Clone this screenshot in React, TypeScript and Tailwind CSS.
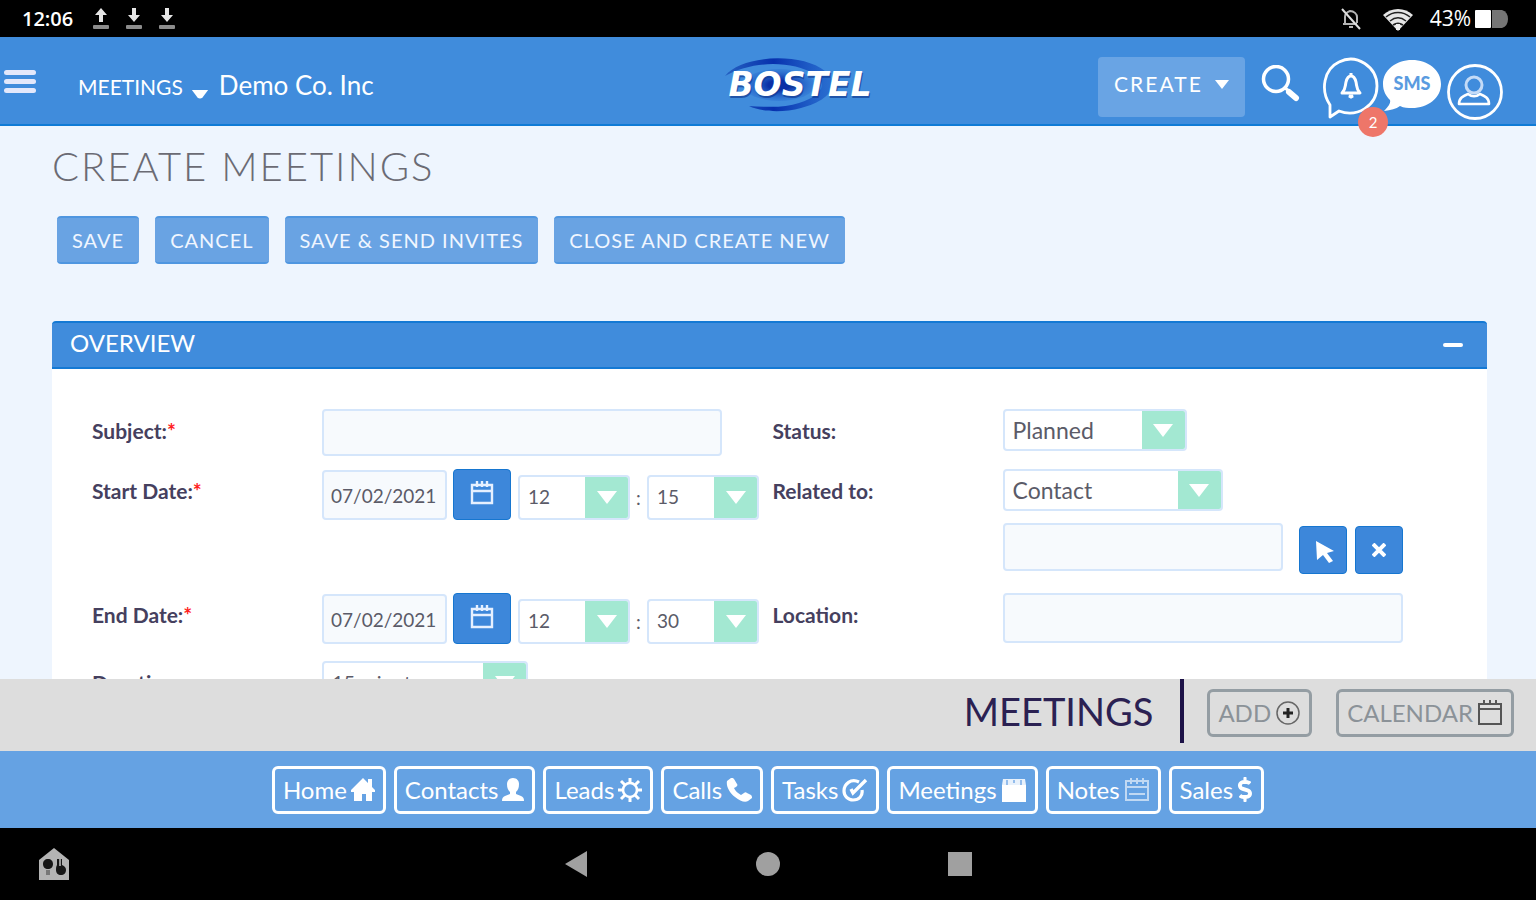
import React from "react";
import { FaDollarSign } from "react-icons/fa";

type IconProps = { className?: string };

function TransferIcon({ up = false }: { up?: boolean }) {
  return (
    <svg viewBox="0 0 18 22" className="h-[22px] w-[18px]" fill="#e6e6e6" aria-hidden="true">
      <path d={up ? "M9 0l6 7h-4v7H7V7H3z" : "M7 0h4v7h4l-6 7-6-7h4z"} />
      <rect x="1" y="17" width="16" height="4" rx="1" fill="#8c8c8c" />
    </svg>
  );
}

function StatusBar() {
  return (
    <div className="flex h-[37px] shrink-0 items-center justify-between bg-black pr-[27px] pl-[22px] text-white">
      <div className="flex items-center gap-[15px]">
        <span className="mr-1 font-['Open_Sans'] text-[20px] font-semibold">12:06</span>
        <TransferIcon up />
        <TransferIcon />
        <TransferIcon />
      </div>
      <div className="flex items-center">
        <svg viewBox="0 0 22 22" className="mr-5 h-[22px] w-[22px]" fill="none" stroke="#b5b5b5" strokeWidth="2" aria-hidden="true">
          <path d="M5 15V9c0-3 2-5 5-6 4 0 7 3 7 6v6M3 16h14M9 19h4" />
          <path d="M2 1l18 20" stroke="#dedede" />
        </svg>
        <svg viewBox="0 0 32 24" className="mr-4 h-6 w-8" aria-hidden="true">
          <path d="M1 8C9 0 23 0 31 8L16 24z" fill="#e6e6e6" />
          <path d="M4 10c7-6 17-6 24 0M8 14c5-4 11-4 16 0M11 18c3-2 7-2 10 0" fill="none" stroke="#222" strokeWidth="1.6" />
          <path d="M14 17h4v6h-4z" fill="#eee" />
        </svg>
        <span className="mr-1 font-['Open_Sans'] text-[21px]">43%</span>
        <svg viewBox="0 0 34 18" className="h-[18px] w-[34px]" aria-hidden="true">
          <path d="M17 0h10q6 2 6 9t-6 9H17z" fill="#757575" />
          <rect width="16" height="18" rx="1" fill="#fff" />
        </svg>
      </div>
    </div>
  );
}

function Logo() {
  return (
    <svg viewBox="0 0 176 60" className="h-[60px] w-[176px]" role="img" aria-label="Bostel">
      <defs>
        <linearGradient id="ring" x1="0" x2="1">
          <stop offset="0" stopColor="#0a35a8" stopOpacity="0.5" />
          <stop offset="0.45" stopColor="#0731ae" />
          <stop offset="1" stopColor="#1b5cc8" stopOpacity="0.6" />
        </linearGradient>
        <radialGradient id="core">
          <stop offset="0.3" stopColor="#0b2fa6" />
          <stop offset="1" stopColor="#2467cf" stopOpacity="0.3" />
        </radialGradient>
      </defs>
      <ellipse cx="66" cy="30" rx="36" ry="16" fill="url(#core)" />
      <path d="M12 21C28 0 88 -3 112 16c18 14 2 31-24 37-18 5-40 4-52-2 18 1 36 2 50-3 22-7 30-19 15-29C80 6 40 5 12 21z" fill="url(#ring)" />
      <text x="88" y="43" textAnchor="middle" fontFamily="DejaVu Sans" fontWeight="700" fontStyle="italic" fontSize="33" fill="#10378f" opacity="0.65">BOSTEL</text>
      <text x="87" y="41" textAnchor="middle" fontFamily="DejaVu Sans" fontWeight="700" fontStyle="italic" fontSize="33" fill="#fff" aria-hidden="true">BOSTEL</text>
    </svg>
  );
}

function Header() {
  return (
    <header className="flex h-[89px] shrink-0 items-start border-b-2 border-[#0f7bd6] bg-[#408cdc] pr-8 pl-1 text-white">
      <div className="flex w-[709px] shrink items-center pt-[30px]">
        <button type="button" aria-label="Menu" className="mb-2 flex w-8 flex-col gap-1">
          <span className="h-[5px] rounded-sm bg-[#e3e8fb]" />
          <span className="h-[5px] rounded-sm bg-[#e3e8fb]" />
          <span className="h-[5px] rounded-sm bg-[#e3e8fb]" />
        </button>
        <button type="button" className="ml-[42px] flex items-end gap-2 pt-1 text-[21px] leading-8">
          MEETINGS
          <svg viewBox="0 0 18 10" className="mb-1 h-[9px] w-[18px]" fill="#fff" aria-hidden="true">
            <path d="M0 0h18l-6 8q-3 3-6 0z" />
          </svg>
        </button>
        <a href="#company" className="ml-[10px] text-[26px] leading-8">Demo Co. Inc</a>
      </div>
      <a href="#home" className="pt-[18px]"><Logo /></a>
      <div className="ml-auto flex items-start pt-5">
        <button type="button" className="flex h-[60px] w-[147px] items-center justify-center gap-3 rounded-sm bg-[#69a4e4] pb-1.5 text-[21px] tracking-widest">
          CREATE
          <svg viewBox="0 0 14 9" className="h-[9px] w-[14px]" fill="#fff" aria-hidden="true"><path d="M0 0h14L7 9z" /></svg>
        </button>
        <button type="button" aria-label="Search" className="mt-2 ml-4">
          <svg viewBox="0 0 40 38" className="h-[38px] w-10" fill="none" stroke="#fff" aria-hidden="true">
            <circle cx="15" cy="14" r="12.5" strokeWidth="3.5" />
            <path d="M24 23l4 3" strokeWidth="3" />
            <path d="M28 27l7 6" strokeWidth="6" strokeLinecap="round" />
          </svg>
        </button>
        <button type="button" aria-label="Notifications" className="relative ml-[21px]">
          <svg viewBox="0 0 58 64" className="h-16 w-[58px]" fill="none" stroke="#fff" aria-hidden="true">
            <path d="M8 48C-2 33 2 12 17 5c18-9 38 5 38 24 0 20-20 32-38 25L8 60z" strokeWidth="2.8" strokeLinejoin="round" />
            <path d="M20 36c4-4 3-7 4-11 1-4 2-6 5-6s4 2 5 6c1 4 0 7 4 11z" strokeWidth="3" strokeLinejoin="round" />
            <path d="M29 16v3M27 39h4l-2 1z" strokeWidth="3" />
          </svg>
          <span className="absolute top-[50px] left-9 flex h-[30px] w-[30px] items-center justify-center rounded-full bg-[#ee7669] text-[15px] text-white">2</span>
        </button>
        <button type="button" aria-label="SMS messages" className="mt-[2px] ml-[2px]">
          <svg viewBox="0 0 60 54" className="h-[54px] w-[60px]" aria-hidden="true">
            <path d="M30 1C14 1 1 11 1 25c0 7 3 12 7 16 1 3-2 7-6 11 7-1 12-2 16-5 4 2 8 2 12 2 16 0 29-10 29-24S46 1 30 1z" fill="#fff" />
            <text x="30" y="31" textAnchor="middle" fontFamily="Lato" fontWeight="900" fontSize="18" fill="#5a9be0">SMS</text>
          </svg>
        </button>
        <button type="button" aria-label="Account" className="mt-[6px] ml-1">
          <svg viewBox="0 0 58 58" className="h-[58px] w-[58px]" fill="none" stroke="#fff" aria-hidden="true">
            <circle cx="29" cy="29" r="26.5" strokeWidth="2.8" />
            <circle cx="28" cy="22" r="8" strokeWidth="3" stroke="#c4dbf7" />
            <path d="M13 41c0-6 4-8 9-10 4 3 8 3 12 0 5 2 9 4 9 10z" strokeWidth="2.6" strokeLinejoin="round" />
          </svg>
        </button>
      </div>
    </header>
  );
}

function ActionButton({ children }: { children: React.ReactNode }) {
  return (
    <button type="button" className="h-12 rounded-sm border-y-2 border-[#4f96e0] bg-[#69a3e3] px-[15px] text-[20px] tracking-wider text-[#f0f6ff]">
      {children}
    </button>
  );
}

function Select({ id, label, value, className }: { id: string; label?: string; value: string; className: string }) {
  return (
    <span className={`relative flex overflow-hidden rounded-sm border-2 border-[#d5e6fb] bg-white ${className}`}>
      <select id={id} aria-label={label} defaultValue={value} className="w-full appearance-none bg-transparent pl-2 text-inherit outline-none">
        <option>{value}</option>
      </select>
      <span className="pointer-events-none absolute inset-y-0 right-0 flex w-[43px] items-center justify-center bg-[#a3e8d2]">
        <svg viewBox="0 0 20 13" className="h-[13px] w-5" fill="#fff" aria-hidden="true"><path d="M0 0h20l-10 13z" /></svg>
      </span>
    </span>
  );
}

function FieldRow({ id, label, required, children }: { id: string; label: string; required?: boolean; children: React.ReactNode }) {
  return (
    <div className="flex items-start">
      <label htmlFor={id} className="w-[230px] shrink-0 pt-[10px] text-[21px] leading-6 font-bold text-[#45405e]">
        {label}
        {required && <span className="text-[#ff2020]">*</span>}
      </label>
      <div className="min-w-0 flex-1">{children}</div>
    </div>
  );
}

const inputStyle = "rounded-sm border-2 border-[#d5e6fb] bg-[#f7fafd] outline-none";

function CalendarIcon({ className = "" }: IconProps) {
  return (
    <svg viewBox="0 0 24 24" className={className} fill="none" stroke="currentColor" strokeWidth="2.4" aria-hidden="true">
      <path d="M2 4h20v18H2zM2 10h20M7 0v6M12 0v6M17 0v6" />
    </svg>
  );
}

function DateTime({ id, name, minute }: { id: string; name: string; minute: string }) {
  return (
    <div className="flex items-end text-[#5b5b68]">
      <input id={id} defaultValue="07/02/2021" className={`h-[50px] w-[125px] px-[7px] text-[19px] ${inputStyle}`} />
      <button type="button" aria-label={`Pick ${name} date`} className="ml-[6px] flex h-[51px] w-[58px] items-center justify-center rounded-sm border border-[#1676d0] bg-[#3d87da] pb-1 text-[#e6f0ff]">
        <CalendarIcon className="h-6 w-6" />
      </button>
      <Select id={`${id}-hour`} label={`${name} hour`} value="12" className="ml-[7px] h-[45px] w-[112px] text-[19px]" />
      <span className="mx-1 w-[9px] pb-2 text-center text-[19px]">:</span>
      <Select id={`${id}-minute`} label={`${name} minute`} value={minute} className="h-[45px] w-[112px] text-[19px]" />
    </div>
  );
}

function MeetingForm() {
  return (
    <div className="flex flex-col gap-[13px] bg-white px-10 pt-10 pb-10">
      <div className="grid grid-cols-2 gap-x-1.5">
        <FieldRow id="subject" label="Subject:" required>
          <input id="subject" className={`block h-[47px] w-[90%] px-2 text-[20px] ${inputStyle}`} />
        </FieldRow>
        <FieldRow id="status" label="Status:">
          <Select id="status" value="Planned" className="h-[42px] w-[184px] text-[23px] text-[#5b5b68]" />
        </FieldRow>
      </div>
      <div className="grid grid-cols-2 gap-x-1.5 pb-[6px]">
        <FieldRow id="start" label="Start Date:" required>
          <DateTime id="start" name="Start" minute="15" />
        </FieldRow>
        <FieldRow id="related" label="Related to:">
          <Select id="related" value="Contact" className="h-[42px] w-[220px] text-[23px] text-[#5b5b68]" />
          <div className="mt-3 flex w-[90%] items-start">
            <input aria-label="Related record" className={`h-[48px] min-w-0 flex-1 px-2 text-[20px] ${inputStyle}`} />
            <button type="button" aria-label="Select record" className="mt-[3px] ml-4 flex h-12 w-12 items-center justify-center rounded-sm border border-[#1676d0] bg-[#3d87da]">
              <svg viewBox="0 0 20 22" className="mt-1 ml-1 h-[22px] w-5" fill="#fff" aria-hidden="true"><path d="M1 0l18 10-7 2 6 8-4 2-6-8-6 5z" /></svg>
            </button>
            <button type="button" aria-label="Clear record" className="mt-[3px] ml-2 flex h-12 w-12 items-center justify-center rounded-sm border border-[#1676d0] bg-[#3d87da]">
              <svg viewBox="0 0 14 14" className="h-[14px] w-[14px]" stroke="#fff" strokeWidth="4" aria-hidden="true"><path d="M1 1l12 12M13 1L1 13" /></svg>
            </button>
          </div>
        </FieldRow>
      </div>
      <div className="grid grid-cols-2 gap-x-1.5 pb-1">
        <FieldRow id="end" label="End Date:" required>
          <DateTime id="end" name="End" minute="30" />
        </FieldRow>
        <FieldRow id="location" label="Location:">
          <input id="location" className={`block h-[50px] w-[90%] px-2 text-[20px] ${inputStyle}`} />
        </FieldRow>
      </div>
      <div className="grid grid-cols-2 gap-x-1.5">
        <FieldRow id="duration" label="Duration:">
          <Select id="duration" value="15 minutes" className="h-[42px] w-[206px] text-[20px] text-[#5b5b68]" />
        </FieldRow>
      </div>
    </div>
  );
}

function HomeIcon() {
  return (
    <svg viewBox="0 0 24 25" className="h-[25px] w-6" fill="currentColor" aria-hidden="true">
      <path d="M12 1l5 5V2h4v8l3 3v2h-3v9h-6v-7h-4v7H3v-9H0v-2z" />
    </svg>
  );
}

function PersonIcon() {
  return (
    <svg viewBox="0 0 22 23" className="h-[23px] w-[22px]" fill="currentColor" aria-hidden="true">
      <path d="M11 0c4 0 6 3 6 6 0 4-1 6-3 8v2l5 2c2 1 3 2 3 5H0c0-3 1-4 3-5l5-2v-2C6 12 5 10 5 6c0-3 2-6 6-6z" />
    </svg>
  );
}

function GearIcon() {
  return (
    <svg viewBox="0 0 24 24" className="h-6 w-6" fill="none" stroke="currentColor" strokeWidth="2.6" aria-hidden="true">
      <circle cx="12" cy="12" r="7" />
      <path d="M12 0v5M12 19v5M0 12h5M19 12h5M3 3l4 4M17 17l4 4M21 3l-4 4M3 21l4-4" strokeWidth="3" />
    </svg>
  );
}

function PhoneIcon() {
  return (
    <svg viewBox="0 0 26 24" className="h-6 w-[26px]" fill="currentColor" aria-hidden="true">
      <path d="M1 3l4-3c1-1 2 0 3 1l3 5c1 1 0 2-1 3L8 10c1 3 4 5 7 7l3-2c1-1 2-1 3 0l4 2c1 1 1 2 1 3l-4 3c-3 2-8 0-13-4C3 14 0 8 1 3z" />
    </svg>
  );
}

function TaskIcon() {
  return (
    <svg viewBox="0 0 26 24" className="h-6 w-[26px]" fill="none" stroke="currentColor" aria-hidden="true">
      <path d="M17 4C9 0 2 6 2 13c0 5 4 9 9 9 6 0 10-4 9-10" strokeWidth="3.2" />
      <path d="M9 11l2 4L24 2" strokeWidth="3.4" />
    </svg>
  );
}

function MeetingIcon() {
  return (
    <svg viewBox="0 0 26 24" className="h-6 w-[26px]" fill="currentColor" aria-hidden="true">
      <path d="M1 7h24v17H1z" />
      <path d="M2 1h22l1 6H1z" opacity="0.85" />
      <path d="M6 2v5M13 2v3M20 2v5" stroke="#78ace8" strokeWidth="1.5" />
    </svg>
  );
}

function NotesIcon() {
  return (
    <svg viewBox="0 0 26 24" className="h-6 w-[26px] opacity-60" fill="none" stroke="currentColor" strokeWidth="2" aria-hidden="true">
      <path d="M2 3h22v19H2zM2 9h22M5 16h16M7 0v6M13 0v6M19 0v6" />
    </svg>
  );
}

const navItems: { label: string; icon: React.ReactNode }[] = [
  { label: "Home", icon: <HomeIcon /> },
  { label: "Contacts", icon: <PersonIcon /> },
  { label: "Leads", icon: <GearIcon /> },
  { label: "Calls", icon: <PhoneIcon /> },
  { label: "Tasks", icon: <TaskIcon /> },
  { label: "Meetings", icon: <MeetingIcon /> },
  { label: "Notes", icon: <NotesIcon /> },
  { label: "Sales", icon: <FaDollarSign className="h-[25px] w-4" /> },
];

function ModuleBar() {
  const button = "flex h-12 items-center gap-1 rounded-md border-[3px] border-[#949da3] px-2 text-[24px] text-[#8b9298]";
  return (
    <div className="flex h-[72px] shrink-0 items-center justify-end bg-[#dddddd] pr-[22px] pb-1">
      <h2 className="mr-[27px] pb-1 text-[38px] leading-[48px] text-[#2b2152]">MEETINGS</h2>
      <span className="mr-[23px] h-16 w-1 self-start bg-[#1d1247]" />
      <button type="button" className={`mr-[24px] ${button}`}>
        ADD
        <svg viewBox="0 0 26 26" className="h-[26px] w-[26px]" fill="none" aria-hidden="true">
          <circle cx="13" cy="13" r="11" stroke="#666" strokeWidth="1.5" />
          <path d="M13 8v10M8 13h10" stroke="#222" strokeWidth="3" />
        </svg>
      </button>
      <button type="button" className={button}>
        CALENDAR
        <svg viewBox="0 0 26 26" className="h-[26px] w-[26px]" fill="none" stroke="#555" strokeWidth="2" aria-hidden="true">
          <path d="M2 4h22v20H2zM2 9h22M7 0v5M13 0v5M19 0v5" />
        </svg>
      </button>
    </div>
  );
}

function SystemBar() {
  return (
    <div className="grid h-[72px] shrink-0 grid-cols-8 items-center bg-black">
      <button type="button" aria-label="Smart home" className="col-start-1 row-start-1 ml-[39px] justify-self-start">
        <svg viewBox="0 0 30 32" className="h-8 w-[30px]" aria-hidden="true">
          <path d="M0 12L15 0l15 12v20H0z" fill="#b4b4b4" />
          <path d="M9 11c3 0 5 2 5 5s-2 5-5 5-5-2-5-5 2-5 5-5zM18 11h5v6c3 1 4 3 4 5 0 3-2 5-5 5s-5-2-5-5c0-2 0-3 1-5z" fill="#171717" />
          <path d="M7 22h4v5H7z" fill="#777" />
          <path d="M20 11h2v7h-2z" fill="#999" />
        </svg>
      </button>
      <button type="button" aria-label="Back" className="col-start-3 col-end-5 row-start-1 justify-self-center">
        <svg viewBox="0 0 22 26" className="h-[26px] w-[22px]" fill="#a0a0a0" aria-hidden="true"><path d="M22 0v26L0 13z" /></svg>
      </button>
      <button type="button" aria-label="Home" className="col-start-4 col-end-6 row-start-1 h-6 w-6 justify-self-center rounded-full bg-[#a0a0a0]" />
      <button type="button" aria-label="Recent apps" className="col-start-5 col-end-7 row-start-1 h-6 w-6 justify-self-center bg-[#a0a0a0]" />
    </div>
  );
}

export default function App() {
  return (
    <div className="flex h-screen flex-col overflow-hidden bg-[#eef5fe] font-['Lato',sans-serif]">
      <StatusBar />
      <Header />
      <main className="min-h-0 flex-1 overflow-hidden pr-[49px] pl-[52px]">
        <h1 className="pt-4 text-[40px] leading-[48px] font-light tracking-wider text-[#6b6b74]">CREATE MEETINGS</h1>
        <div className="mt-[26px] ml-[5px] flex gap-4">
          <ActionButton>SAVE</ActionButton>
          <ActionButton>CANCEL</ActionButton>
          <ActionButton>SAVE &amp; SEND INVITES</ActionButton>
          <ActionButton>CLOSE AND CREATE NEW</ActionButton>
        </div>
        <section className="mt-[57px]">
          <button type="button" aria-expanded="true" className="flex h-12 w-full items-center justify-between rounded-t-sm border-y-2 border-[#1479d4] bg-[#408cdc] pr-6 pl-[18px] text-[24px] text-white">
            <span className="pb-1">OVERVIEW</span>
            <span className="h-1 w-5 rounded-sm bg-white" />
          </button>
          <MeetingForm />
        </section>
      </main>
      <ModuleBar />
      <nav className="flex h-[77px] shrink-0 items-center justify-center gap-2 bg-[#65a2e3]">
        {navItems.map(({ label, icon }) => (
          <a key={label} href={`#${label.toLowerCase()}`} className="flex h-12 items-center gap-1 rounded-md border-[3px] border-white px-2 text-[24px] text-white">
            <span>{label}</span>
            {icon}
          </a>
        ))}
      </nav>
      <SystemBar />
    </div>
  );
}
